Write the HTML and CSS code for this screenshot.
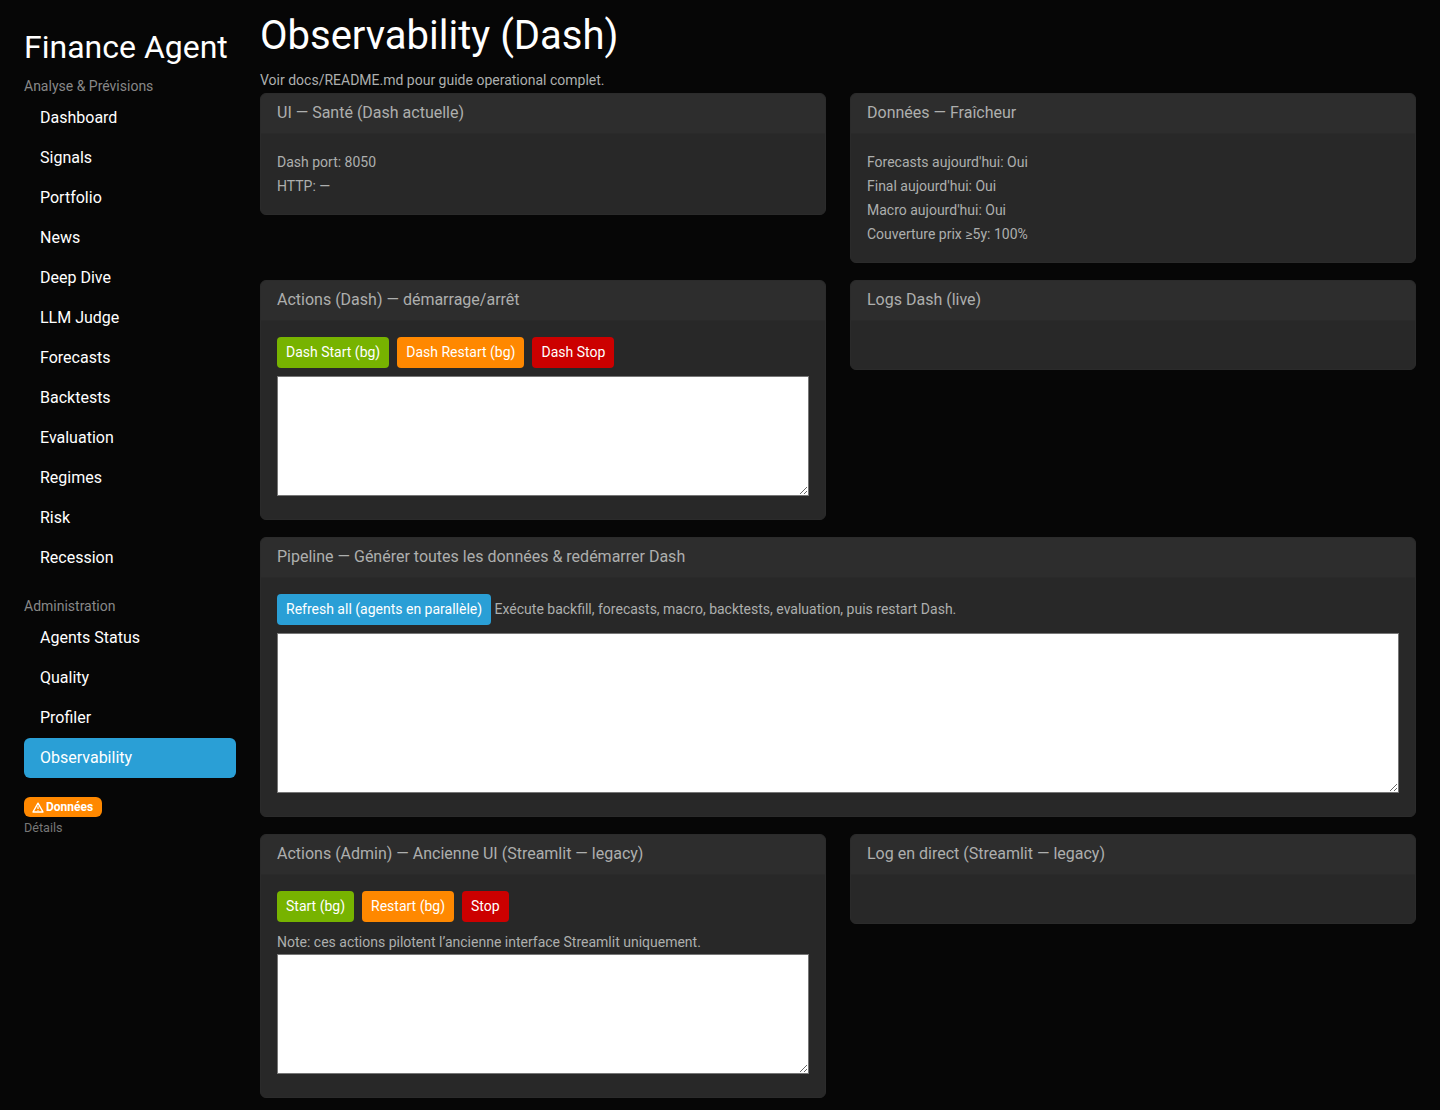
FILE: index.html
```html
<!DOCTYPE html>
<html lang="fr">
<head>
  <meta charset="UTF-8">
  <meta name="viewport" content="width=device-width, initial-scale=1.0">
  <title>Observability (Dash)</title>
  <link rel="stylesheet" href="styles.css">
</head>
<body>
  <div class="layout">
    <aside class="sidebar">
      <h2 class="brand">Finance Agent</h2>
      <div class="nav-label">Analyse &amp; Prévisions</div>
      <nav class="nav">
        <a href="#">Dashboard</a>
        <a href="#">Signals</a>
        <a href="#">Portfolio</a>
        <a href="#">News</a>
        <a href="#">Deep Dive</a>
        <a href="#">LLM Judge</a>
        <a href="#">Forecasts</a>
        <a href="#">Backtests</a>
        <a href="#">Evaluation</a>
        <a href="#">Regimes</a>
        <a href="#">Risk</a>
        <a href="#">Recession</a>
      </nav>
      <div class="nav-label nav-label-admin">Administration</div>
      <nav class="nav">
        <a href="#">Agents Status</a>
        <a href="#">Quality</a>
        <a href="#">Profiler</a>
        <a href="#" class="active">Observability</a>
      </nav>
      <span class="badge"><svg class="badge-icon" viewBox="0 0 12 11" width="12" height="11"><path d="M6 1.2 11 10H1Z" fill="none" stroke="#fff" stroke-width="1.4" stroke-linejoin="round"/><path d="M6 4.2v2.8M6 7.9v.9" stroke="#fff" stroke-width="1.2"/></svg>Données</span>
      <div class="details">Détails</div>
    </aside>

    <main class="content">
      <h1>Observability (Dash)</h1>
      <p class="intro">Voir docs/README.md pour guide operational complet.</p>

      <div class="row">
        <section class="card">
          <div class="card-header">UI — Santé (Dash actuelle)</div>
          <div class="card-body">
            <div class="line">Dash port: 8050</div>
            <div class="line">HTTP: —</div>
          </div>
        </section>
        <section class="card">
          <div class="card-header">Données — Fraîcheur</div>
          <div class="card-body">
            <div class="line">Forecasts aujourd'hui: Oui</div>
            <div class="line">Final aujourd'hui: Oui</div>
            <div class="line">Macro aujourd'hui: Oui</div>
            <div class="line">Couverture prix ≥5y: 100%</div>
          </div>
        </section>
      </div>

      <div class="row">
        <section class="card">
          <div class="card-header">Actions (Dash) — démarrage/arrêt</div>
          <div class="card-body">
            <div class="actions">
              <button class="btn btn-green">Dash Start (bg)</button>
              <button class="btn btn-orange">Dash Restart (bg)</button>
              <button class="btn btn-red">Dash Stop</button>
            </div>
            <textarea class="log"></textarea>
          </div>
        </section>
        <section class="card">
          <div class="card-header">Logs Dash (live)</div>
          <div class="card-body card-body-empty"></div>
        </section>
      </div>

      <section class="card card-wide">
        <div class="card-header">Pipeline — Générer toutes les données &amp; redémarrer Dash</div>
        <div class="card-body">
          <div class="actions actions-tight">
            <button class="btn btn-blue">Refresh all (agents en parallèle)</button>
            <span class="hint">Exécute backfill, forecasts, macro, backtests, evaluation, puis restart Dash.</span>
          </div>
          <textarea class="log log-tall"></textarea>
        </div>
      </section>

      <div class="row">
        <section class="card">
          <div class="card-header">Actions (Admin) — Ancienne UI (Streamlit — legacy)</div>
          <div class="card-body">
            <div class="actions">
              <button class="btn btn-green">Start (bg)</button>
              <button class="btn btn-orange">Restart (bg)</button>
              <button class="btn btn-red">Stop</button>
            </div>
            <div class="note">Note: ces actions pilotent l’ancienne interface Streamlit uniquement.</div>
            <textarea class="log"></textarea>
          </div>
        </section>
        <section class="card">
          <div class="card-header">Log en direct (Streamlit — legacy)</div>
          <div class="card-body card-body-empty"></div>
        </section>
      </div>
    </main>
  </div>
</body>
</html>
```

FILE: styles.css
```css
* {
  box-sizing: border-box;
}
html, body {
  height: 100%;
}
body {
  margin: 0;
  background: #060606;
  color: #adafae;
  font-family: Roboto, "Liberation Sans", sans-serif;
  font-size: 14px;
  line-height: 21px;
  overflow: hidden;
}
.layout {
  display: flex;
  align-items: flex-start;
}

/* sidebar */
.sidebar {
  width: 260px;
  flex-shrink: 0;
  padding: 24px 24px 0;
}
.brand {
  margin: 0;
  color: #fff;
  font-size: 32px;
  font-weight: 400;
  line-height: 46px;
}
.nav-label {
  margin-top: 6px;
  margin-bottom: 1px;
  color: #888;
  font-size: 14px;
  line-height: 21px;
}
.nav-label-admin {
  margin-top: 18px;
}
.nav a {
  display: block;
  height: 40px;
  padding: 8px 16px;
  color: #fff;
  font-size: 16px;
  line-height: 24px;
  text-decoration: none;
  border-radius: 6px;
}
.nav a.active {
  background: #2a9fd6;
}
.badge {
  display: inline-flex;
  align-items: center;
  gap: 2px;
  width: 78px;
  height: 20px;
  margin-top: 19px;
  padding-left: 8px;
  background: #ff8800;
  color: #fff;
  font-size: 12px;
  font-weight: 700;
  line-height: 20px;
  border-radius: 6px;
  vertical-align: top;
}
.badge-icon {
  flex-shrink: 0;
}
.details {
  margin-top: 1px;
  color: #777;
  font-size: 12.6px;
  line-height: 20px;
}

/* main column */
.content {
  width: 1156px;
  padding-top: 9px;
}
h1 {
  margin: 0;
  color: #fff;
  font-size: 40px;
  font-weight: 400;
  line-height: 54px;
}
.intro {
  margin: 6px 0 1px;
  line-height: 23px;
}
.row {
  display: grid;
  grid-template-columns: 566px 566px;
  column-gap: 24px;
  align-items: start;
}
.card {
  margin-bottom: 17px;
  background: #282828;
  border: 1px solid #2b2b2b;
  border-radius: 6px;
}
.card-header {
  height: 40px;
  padding: 0 16px;
  background: #2d2d2d;
  border-bottom: 1px solid #2a2a2a;
  border-radius: 5px 5px 0 0;
  font-size: 16px;
  line-height: 38px;
}
.card-body {
  padding: 16px;
}
.card-body-empty {
  height: 48px;
}
.line {
  height: 24px;
  line-height: 24px;
}
.actions {
  display: flex;
  align-items: center;
  gap: 8px;
  margin-bottom: 8px;
}
.actions-tight {
  gap: 3.5px;
}
.btn {
  height: 31px;
  padding: 0 8px;
  border: 1px solid transparent;
  border-radius: 4px;
  color: #fff;
  font-family: inherit;
  font-size: 14px;
  line-height: 21px;
}
.btn-green { background: #77b300; }
.btn-orange { background: #ff8800; }
.btn-red { background: #cc0000; }
.btn-blue { background: #2a9fd6; }
.note {
  margin-top: 8px;
  height: 24px;
  line-height: 24px;
}
.log {
  display: block;
  width: 100%;
  height: 120px;
  margin-bottom: 7px;
  background: #fff;
  border: 1px solid #767676;
  padding: 2px;
}
.log-tall {
  height: 160px;
}
```
